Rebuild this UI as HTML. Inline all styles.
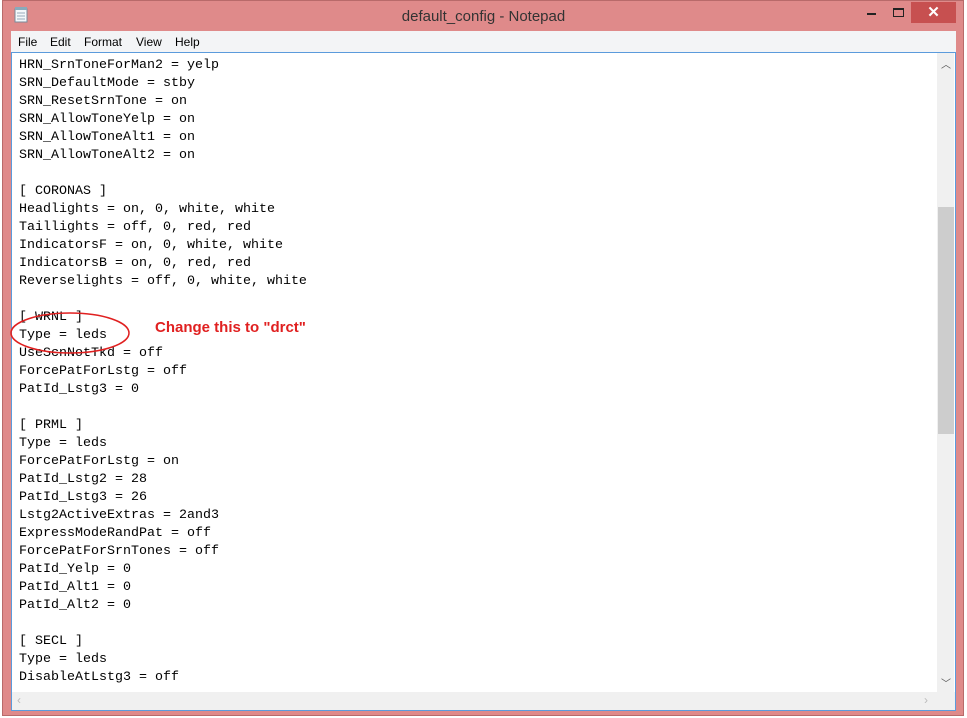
<!DOCTYPE html>
<html><head><meta charset="utf-8"><style>
body{margin:0;width:967px;height:718px;background:#fff;position:relative;overflow:hidden;font-family:"Liberation Sans",sans-serif}
.frame{position:absolute;left:2px;top:0;width:962px;height:716px;background:#df8a8a;border:1px solid #b86a6a;box-sizing:border-box}
.title{position:absolute;left:0;top:8px;width:967px;text-align:center;font-size:15px;color:#333}
.close{position:absolute;left:911px;top:2px;width:45px;height:21px;background:#c75050;color:#fff;text-align:center;font-size:15px;line-height:21px;font-weight:bold}
.menu{position:absolute;left:11px;top:31px;width:945px;height:21px;background:#f3f4f6;font-size:12px;color:#000}
.menu span{position:absolute;top:4px}
.edit{position:absolute;left:11px;top:52px;width:945px;height:659px;background:#fff;border:1px solid #5b9bdc;box-sizing:border-box}
pre{position:absolute;left:7px;top:4px;margin:0;font-family:"Liberation Mono",monospace;font-size:13.33px;line-height:18px;color:#000}
.vs{position:absolute;left:925px;top:0;width:17px;height:639px;background:#f0f0f0}
.thumb{position:absolute;left:926px;top:154px;width:16px;height:227px;background:#cdcdcd}
.hs{position:absolute;left:0;top:639px;width:943px;height:18px;background:#f0f0f0}
</style></head><body>
<div class="frame"></div>
<svg style="position:absolute;left:14px;top:7px" width="14" height="16"><rect x="1" y="2" width="12" height="13" fill="#f4f8fb" stroke="#7a8a99"/><line x1="3" y1="6" x2="11" y2="6" stroke="#9ab"/><line x1="3" y1="9" x2="11" y2="9" stroke="#9ab"/><line x1="3" y1="12" x2="11" y2="12" stroke="#9ab"/><rect x="1" y="0" width="12" height="3" fill="#8ab"/></svg>
<div class="title">default_config - Notepad</div>
<div style="position:absolute;left:867px;top:13px;width:9px;height:2px;background:#222"></div>
<div style="position:absolute;left:893px;top:8px;width:9px;height:6px;border:1px solid #222;border-top-width:2px"></div>
<div class="close">✕</div>
<div class="menu"><span style="left:7px">File</span><span style="left:39px">Edit</span><span style="left:73px">Format</span><span style="left:125px">View</span><span style="left:164px">Help</span></div>
<div class="edit">
<pre>HRN_SrnToneForMan2 = yelp
SRN_DefaultMode = stby
SRN_ResetSrnTone = on
SRN_AllowToneYelp = on
SRN_AllowToneAlt1 = on
SRN_AllowToneAlt2 = on

[ CORONAS ]
Headlights = on, 0, white, white
Taillights = off, 0, red, red
IndicatorsF = on, 0, white, white
IndicatorsB = on, 0, red, red
Reverselights = off, 0, white, white

[ WRNL ]
Type = leds
UseScnNotTkd = off
ForcePatForLstg = off
PatId_Lstg3 = 0

[ PRML ]
Type = leds
ForcePatForLstg = on
PatId_Lstg2 = 28
PatId_Lstg3 = 26
Lstg2ActiveExtras = 2and3
ExpressModeRandPat = off
ForcePatForSrnTones = off
PatId_Yelp = 0
PatId_Alt1 = 0
PatId_Alt2 = 0

[ SECL ]
Type = leds
DisableAtLstg3 = off</pre>
<div class="vs"></div><div class="thumb"></div>
<div style="position:absolute;left:929px;top:3px;font-size:10px;color:#555">︿</div>
<div style="position:absolute;left:929px;top:622px;font-size:10px;color:#555">﹀</div>
<div class="hs"></div>
<div style="position:absolute;left:5px;top:640px;font-size:12px;color:#bbb">‹</div>
<div style="position:absolute;left:912px;top:640px;font-size:12px;color:#bbb">›</div>
</div>
<svg style="position:absolute;left:0;top:0" width="967" height="718"><ellipse cx="70" cy="333" rx="59" ry="20" fill="none" stroke="#e02020" stroke-width="1.5"/></svg>
<div style="position:absolute;left:155px;top:319px;font-size:15px;font-weight:bold;color:#e02020">Change this to "drct"</div>
</body></html>
